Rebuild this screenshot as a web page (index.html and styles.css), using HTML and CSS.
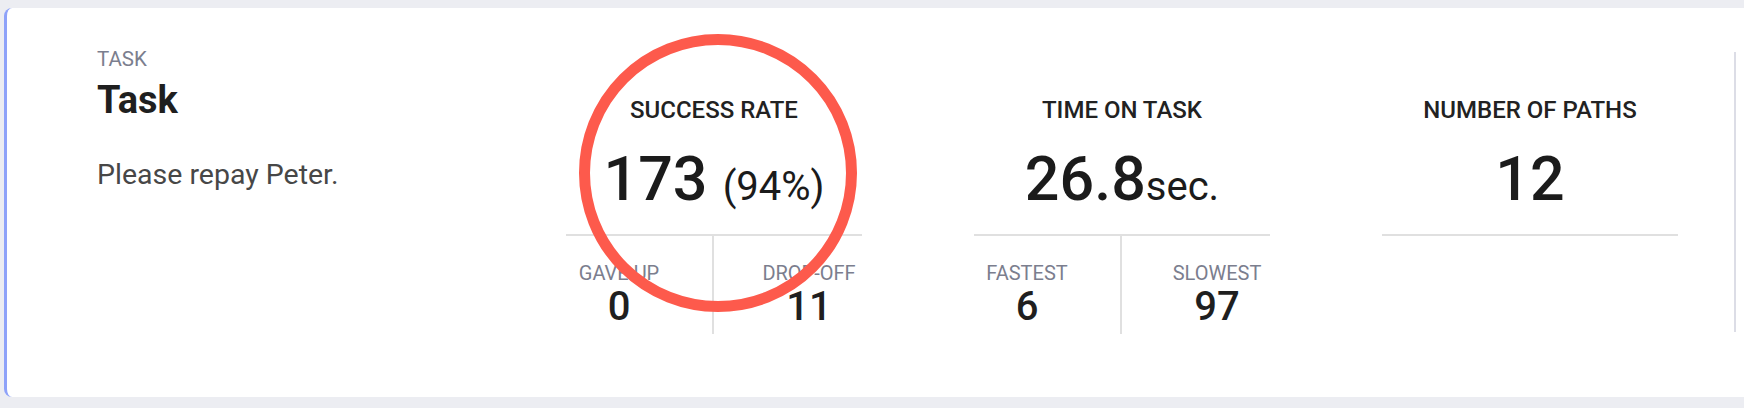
FILE: index.html
```html
<!DOCTYPE html>
<html lang="en">
<head>
    <meta charset="UTF-8">
    <meta name="viewport" content="width=device-width, initial-scale=1.0">
    <title>Task Results</title>
    <link rel="stylesheet" href="styles.css">
</head>
<body>
    <div class="card">
        <div class="task">
            <div class="task-label">TASK</div>
            <h2 class="task-title">Task</h2>
            <p class="task-text">Please repay Peter.</p>
        </div>

        <div class="stat">
            <div class="stat-title">SUCCESS RATE</div>
            <div class="stat-value">173 <span class="stat-small">(94%)</span></div>
            <div class="stat-split">
                <div class="split-cell left">
                    <div class="split-item">
                        <div class="split-label">GAVE UP</div>
                        <div class="split-value">0</div>
                    </div>
                </div>
                <div class="split-cell right">
                    <div class="split-item">
                        <div class="split-label">DROP-OFF</div>
                        <div class="split-value">11</div>
                    </div>
                </div>
            </div>
        </div>

        <div class="stat">
            <div class="stat-title">TIME ON TASK</div>
            <div class="stat-value">26.8<span class="stat-small">sec.</span></div>
            <div class="stat-split">
                <div class="split-cell left">
                    <div class="split-item">
                        <div class="split-label">FASTEST</div>
                        <div class="split-value">6</div>
                    </div>
                </div>
                <div class="split-cell right">
                    <div class="split-item">
                        <div class="split-label">SLOWEST</div>
                        <div class="split-value">97</div>
                    </div>
                </div>
            </div>
        </div>

        <div class="stat last">
            <div class="stat-title">NUMBER OF PATHS</div>
            <div class="stat-value">12</div>
        </div>

        <div class="next-col"></div>

        <!-- annotation ring around the success rate -->
        <div class="highlight"></div>
    </div>
</body>
</html>
```

FILE: styles.css
```css
body {
    margin: 8px 0 0 4px;
    background-color: #ecedf2;
    font-family: Roboto, "Liberation Sans", sans-serif;
    overflow: hidden;
}
.card {
    position: relative;
    display: flex;
    align-items: flex-start;
    width: 1800px;
    height: 389px;
    box-sizing: border-box;
    padding: 39px 0 0 90px;
    background-color: white;
    border-left: 3px solid #8ea2f9;
    border-radius: 8px;
}
.task {
    flex: none;
    width: 469px;
}
.task-label {
    font-size: 20.5px;
    line-height: 24px;
    color: #7b7e8e;
}
.task-title {
    margin: 7px 0 0;
    font-size: 38px;
    line-height: 44px;
    font-weight: 700;
    color: #1f1f1f;
}
.task-text {
    margin: 37px 0 0;
    font-size: 28.5px;
    line-height: 32px;
    color: #474747;
}
.stat {
    flex: none;
    width: 296px;
    margin: 49px 112px 0 0;
    text-align: center;
}
.stat.last {
    margin-right: 56px;
}
.stat-title {
    font-size: 24px;
    line-height: 28px;
    font-weight: 500;
    color: #222;
}
.stat-value {
    margin-top: 19px;
    padding-bottom: 19px;
    border-bottom: 2px solid #e0e0e0;
    font-size: 61px;
    line-height: 72px;
    font-weight: 500;
    color: #1b1b1b;
}
.stat-small {
    font-size: 40px;
    line-height: 1;
    font-weight: 400;
}
.stat-split {
    display: grid;
    grid-template-columns: 1fr 1fr;
}
.split-cell {
    display: flex;
    padding: 25px 0 5px;
}
.split-cell.left {
    border-right: 2px solid #e0e0e0;
}
.split-cell.right {
    justify-content: flex-end;
}
.split-item {
    width: 106px;
}
.split-label {
    font-size: 20px;
    line-height: 24px;
    color: #7b7e8e;
}
.split-value {
    font-size: 40px;
    line-height: 44px;
    font-weight: 500;
    color: #1f1f1f;
}
.next-col {
    flex: none;
    width: 60px;
    height: 280px;
    margin-top: 5px;
    border-left: 2px solid #dcdde6;
}
.highlight {
    position: absolute;
    left: 572px;
    top: 26px;
    width: 278px;
    height: 278px;
    box-sizing: border-box;
    border: 11px solid #fd5a4c;
    border-radius: 50%;
    pointer-events: none;
}
```
